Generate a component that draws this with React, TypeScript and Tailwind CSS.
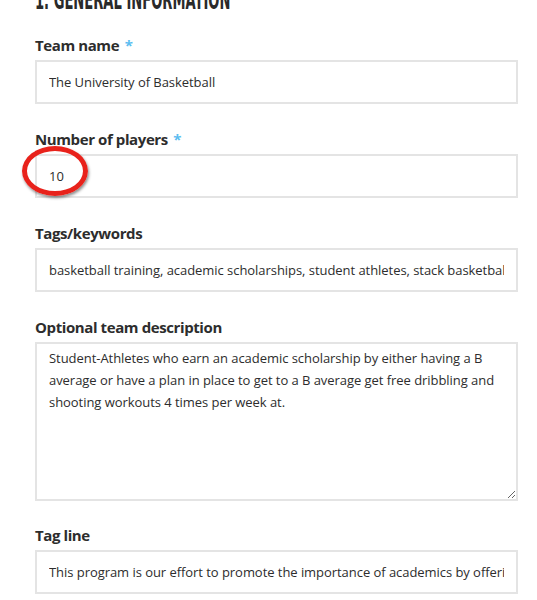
import React from 'react'

const labelCls =
  'block text-[15px] leading-5 font-bold text-[#2d2d2d] mb-[5px] tracking-[-0.4px]'
const inputCls =
  'block w-full h-[44px] border-2 border-[#e4e4e4] bg-white px-[12px] text-[13px] tracking-[-0.05px] text-[#2d2d2d] outline-none'

const Star = () => <span className="text-[#5cbdf0] ml-[2px]">*</span>

export default function App() {
  return (
    <div
      className="w-[537px] h-[600px] overflow-hidden bg-white pl-[35px] pr-[19px]"
      style={{ fontFamily: '"Open Sans", "DejaVu Sans", sans-serif' }}
    >
      <h1
        className="mt-[-12px] text-[26px] leading-[24px] font-bold text-[#2a2a2a] uppercase whitespace-nowrap origin-left scale-x-[0.56]"
        style={{ fontFamily: '"DejaVu Sans Condensed", "Liberation Sans Narrow", sans-serif' }}
      >
        1. General Information
      </h1>

      <div className="mt-[23px]">
        <label className={labelCls}>
          Team name <Star />
        </label>
        <input className={inputCls} readOnly value="The University of Basketball" />
      </div>

      <div className="mt-[25px] relative">
        <label className={labelCls}>
          Number of players <Star />
        </label>
        <input className={inputCls} readOnly value="10" />
        <div className="absolute left-[-13px] top-[17px] w-[66px] h-[50px] rounded-[50%] border-[5px] border-[#e8221b] shadow-[1px_2px_3px_rgba(0,0,0,0.45)] pointer-events-none" />
      </div>

      <div className="mt-[25px]">
        <label className={labelCls}>Tags/keywords</label>
        <input
          className={inputCls}
          readOnly
          value="basketball training, academic scholarships, student athletes, stack basketball, free workouts"
        />
      </div>

      <div className="mt-[25px]">
        <label className={labelCls}>Optional team description</label>
        <textarea
          className="block w-full h-[159px] border-2 border-[#e4e4e4] bg-white px-[12px] pt-[3px] text-[13px] leading-[22px] tracking-[-0.05px] text-[#2d2d2d] outline-none"
          readOnly
          value="Student-Athletes who earn an academic scholarship by either having a B average or have a plan in place to get to a B average get free dribbling and shooting workouts 4 times per week at."
        />
      </div>

      <div className="mt-[24px]">
        <label className={labelCls}>Tag line</label>
        <input
          className={inputCls}
          readOnly
          value="This program is our effort to promote the importance of academics by offering free training"
        />
      </div>
    </div>
  )
}
